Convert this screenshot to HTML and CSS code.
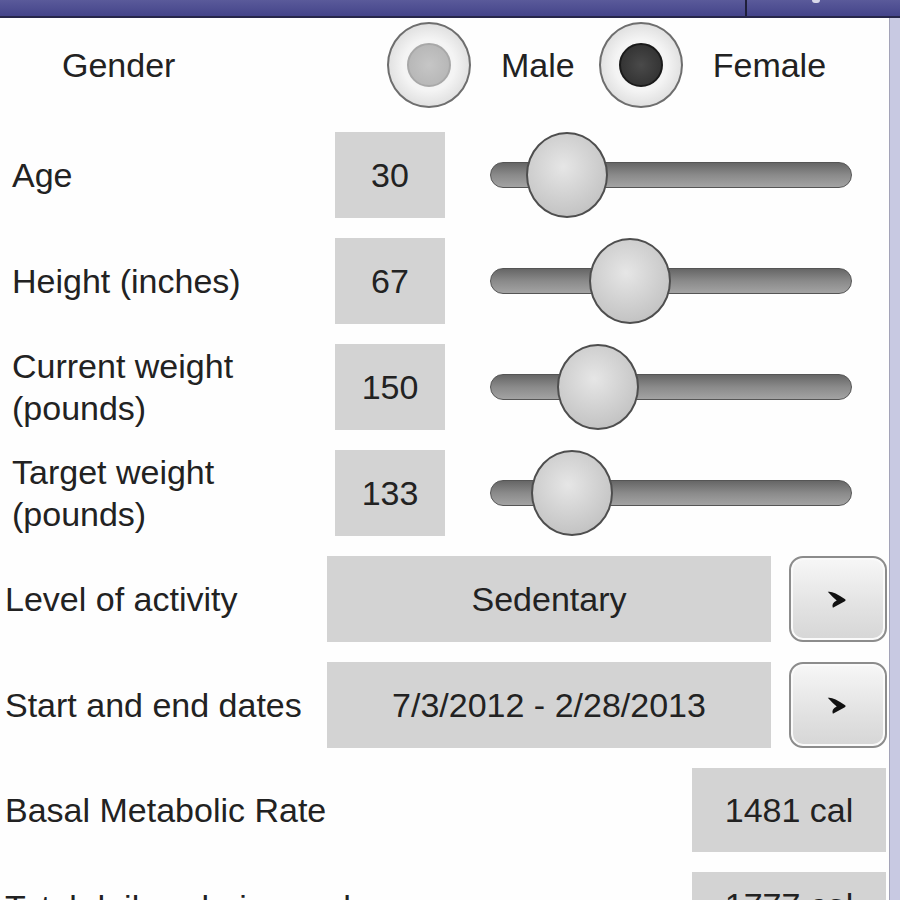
FILE: index.html
```html
<!DOCTYPE html>
<html>
<head>
<meta charset="utf-8">
<link rel="stylesheet" href="styles.css">
</head>
<body>
<div class="topbar"><span class="divider"></span><span class="topicon"></span></div>
<div class="frame">
  <main class="panel">
    <div class="row gender-row">
      <span class="label gender-label">Gender</span>
      <span class="radio"><span class="dot dot-off"></span></span>
      <span class="radio-text">Male</span>
      <span class="radio radio-second"><span class="dot dot-on"></span></span>
      <span class="radio-text">Female</span>
    </div>

    <div class="row slider-row">
      <span class="label">Age</span>
      <span class="value">30</span>
      <div class="track"><span class="thumb" style="left:35px"></span></div>
    </div>
    <div class="row slider-row">
      <span class="label">Height (inches)</span>
      <span class="value">67</span>
      <div class="track"><span class="thumb" style="left:98px"></span></div>
    </div>
    <div class="row slider-row">
      <span class="label two-line">Current weight<br>(pounds)</span>
      <span class="value">150</span>
      <div class="track"><span class="thumb" style="left:66px"></span></div>
    </div>
    <div class="row slider-row">
      <span class="label two-line">Target weight<br>(pounds)</span>
      <span class="value">133</span>
      <div class="track"><span class="thumb" style="left:40px"></span></div>
    </div>

    <div class="row picker-row">
      <span class="label label-wide">Level of activity</span>
      <span class="value">Sedentary</span>
      <button class="next" type="button"><svg viewBox="0 0 20 18" width="26" height="23"><path d="M2 3 Q6 2 15 8.5 Q17 9.5 15 10.5 L6 15.5 Q4.5 12 9 9.8 Q6 7.5 2 3 Z" fill="#111"/></svg></button>
    </div>
    <div class="row picker-row">
      <span class="label label-wide">Start and end dates</span>
      <span class="value">7/3/2012 - 2/28/2013</span>
      <button class="next" type="button"><svg viewBox="0 0 20 18" width="26" height="23"><path d="M2 3 Q6 2 15 8.5 Q17 9.5 15 10.5 L6 15.5 Q4.5 12 9 9.8 Q6 7.5 2 3 Z" fill="#111"/></svg></button>
    </div>

    <div class="row result-row">
      <span class="label label-wide">Basal Metabolic Rate</span>
      <span class="value">1481 cal</span>
    </div>
    <div class="row result-row last-row">
      <span class="label label-wide">Total daily calorie needs</span>
      <span class="value">1777 cal</span>
    </div>
  </main>
  <aside class="edge"></aside>
</div>
</body>
</html>
```

FILE: styles.css
```css
html, body {
  margin: 0;
  padding: 0;
  background: #fdfdfd;
  overflow: hidden;
}
body {
  width: 900px;
  height: 900px;
  font-family: "Liberation Sans", Arial, sans-serif;
  font-size: 34px;
  color: #222;
}
.topbar {
  position: relative;
  height: 16px;
  background: linear-gradient(#5a5a9a, #44448a);
  border-bottom: 2px solid #26264a;
}
.divider {
  position: absolute;
  left: 745px;
  top: 0;
  width: 2px;
  height: 16px;
  background: #1e1e3a;
}
.topicon {
  position: absolute;
  left: 812px;
  top: 0;
  width: 8px;
  height: 3px;
  border-radius: 0 0 4px 4px;
  background: #d8d8ea;
}
.frame {
  display: flex;
  height: 882px;
}
.panel {
  width: 889px;
  display: flex;
  flex-direction: column;
  gap: 20px;
  background: #fefefe;
}
.edge {
  width: 10px;
  background: #c8c9e2;
  border-left: 1px solid #a3a3b8;
}
.row {
  display: flex;
  align-items: center;
  height: 86px;
  flex-shrink: 0;
}
.label {
  line-height: 42px;
}
.value {
  background: #d3d3d3;
  height: 86px;
  display: flex;
  align-items: center;
  justify-content: center;
}

/* gender */
.gender-row {
  height: 94px;
}
.gender-label {
  width: 325px;
  padding-left: 62px;
}
.radio {
  width: 80px;
  height: 82px;
  border-radius: 50%;
  border: 2px solid #6e6e6e;
  background: radial-gradient(circle, #f4f4f4 45%, #dedede 75%, #cfcfcf 100%);
  display: flex;
  align-items: center;
  justify-content: center;
  box-sizing: content-box;
}
.radio-second {
  margin-left: 24px;
}
.radio-text {
  margin-left: 30px;
}
.dot {
  width: 40px;
  height: 40px;
  border-radius: 50%;
}
.dot-off {
  background: radial-gradient(circle, #c6c6c6, #b2b2b2);
  border: 2px solid #a8a8a8;
}
.dot-on {
  background: radial-gradient(circle, #4a4a4a, #2c2c2c);
  border: 2px solid #1a1a1a;
}

/* sliders */
.slider-row .label {
  width: 323px;
  padding-left: 12px;
}
.slider-row .value {
  width: 110px;
}
.track {
  position: relative;
  margin-left: 45px;
  width: 360px;
  height: 24px;
  border-radius: 13px;
  border: 1px solid #555;
  background: linear-gradient(#666, #8a8a8a 50%, #a3a3a3);
}
.thumb {
  position: absolute;
  top: -31px;
  width: 78px;
  height: 82px;
  border-radius: 50%;
  border: 2px solid #4e4e4e;
  background: radial-gradient(circle at 45% 40%, #e6e6e6, #c6c6c6 70%, #b4b4b4);
}

/* pickers */
.label-wide {
  padding-left: 5px;
}
.picker-row .label {
  width: 322px;
}
.picker-row .value {
  width: 444px;
}
.next {
  margin-left: 18px;
  width: 98px;
  height: 86px;
  padding: 0;
  border: 2px solid #8c8c8c;
  border-radius: 14px;
  background: linear-gradient(#f7f7f7, #e2e2e2 60%, #d6d6d6);
  box-shadow: inset 0 0 0 2px #fafafa;
  display: flex;
  align-items: center;
  justify-content: center;
}

/* results */
.result-row {
  height: 84px;
  justify-content: space-between;
}
.result-row .value {
  width: 194px;
  height: 84px;
  margin-right: 3px;
}
.last-row {
  align-items: flex-start;
}
.last-row .label {
  padding-top: 14px;
}
.last-row .value {
  align-items: flex-start;
  padding-top: 14px;
  box-sizing: border-box;
}
```
